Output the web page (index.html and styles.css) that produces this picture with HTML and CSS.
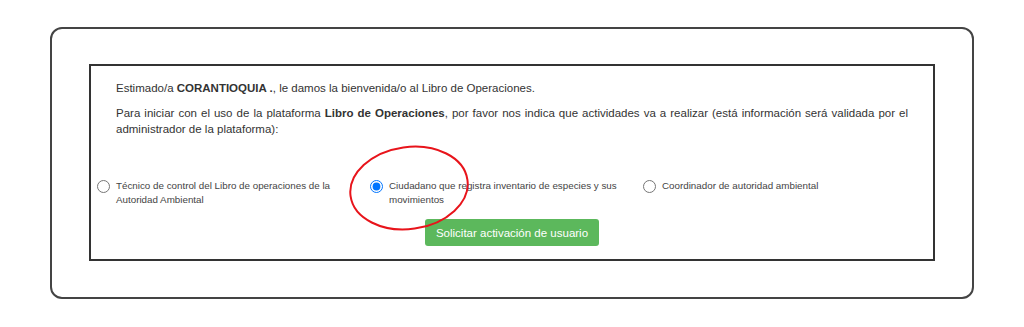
FILE: index.html
```html
<html>
	<head>
		<title>Libro de Operaciones</title>
		<meta name="viewport" content="width=device-width, initial-scale=1.0">
		<link rel="stylesheet" href="styles.css">
	</head>
	<body>
		<div class="frame">
			<div class="panel">
				<p class="intro">Estimado/a <b>CORANTIOQUIA .</b>, le damos la bienvenida/o al Libro de Operaciones.</p>
				<p class="intro">Para iniciar con el uso de la plataforma <b>Libro de Operaciones</b>, por favor nos indica que actividades va a realizar (está información será validada por el administrador de la plataforma):</p>
				<div class="roles">
					<label class="role">
						<input type="radio" name="rol" value="1">
						<span>Técnico de control del Libro de operaciones de la Autoridad Ambiental</span>
					</label>
					<label class="role">
						<input type="radio" name="rol" value="2" checked>
						<span>Ciudadano que registra inventario de especies y sus movimientos</span>
					</label>
					<label class="role">
						<input type="radio" name="rol" value="3">
						<span>Coordinador de autoridad ambiental</span>
					</label>
				</div>
				<div class="actions">
					<button class="button">Solicitar activación de usuario</button>
				</div>
				<svg class="mark" width="124" height="90" viewBox="0 0 124 90">
					<ellipse cx="62" cy="45" rx="59" ry="41" transform="rotate(-8 62 45)" fill="none" stroke="#e8141b" stroke-width="2"/>
				</svg>
			</div>
		</div>
	</body>
</html>
```

FILE: styles.css
```css
body {
	margin: 0;
	background-color: #fff;
	font-family: "Liberation Sans", Arial, sans-serif;
	color: #333;
}
.frame {
	margin: 27px 0 0 50px;
	width: 924px;
	box-sizing: border-box;
	border: 2px solid #444;
	border-radius: 12px;
	padding: 35px 0 36px 37px;
}
.panel {
	position: relative;
	width: 846px;
	box-sizing: border-box;
	border: 2px solid #333;
	padding: 14px 25px 13px 25px;
}
.intro {
	margin: 0 0 9px 0;
	font-size: 11.5px;
	line-height: 16px;
	text-align: justify;
}
.roles {
	display: grid;
	grid-template-columns: 273px 273px 273px;
	margin: 42px 0 0 -19px;
	font-size: 9.8px;
	line-height: 14px;
	color: #444;
}
.role {
	display: flex;
	align-items: flex-start;
	gap: 6px;
	padding-right: 14px;
}
.role input {
	margin: 1px 0 0 0;
	width: 13px;
	height: 13px;
	flex: none;
}
.actions {
	display: flex;
	justify-content: center;
	margin-top: 12px;
}
.button {
	background-color: #5cb85c;
	border: none;
	border-radius: 3px;
	color: white;
	font-family: "Liberation Sans", Arial, sans-serif;
	font-size: 11.5px;
	height: 27px;
	padding: 0 11px;
	cursor: pointer;
}
.mark {
	position: absolute;
	left: 256px;
	top: 77px;
}
```
